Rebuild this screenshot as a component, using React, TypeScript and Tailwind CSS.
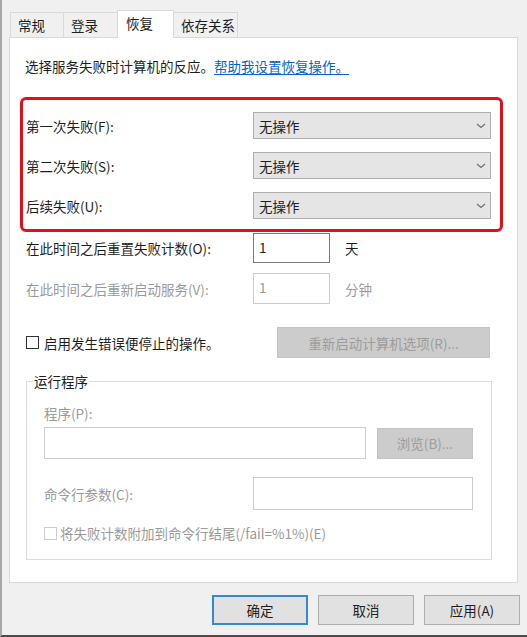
import type { ReactNode } from 'react'

const FONT = { fontFamily: '"Noto Sans CJK SC", "Noto Sans", sans-serif' }

function Tab({ label, width, active = false }: { label: string; width: string; active?: boolean }) {
  if (active) {
    return (
      <div className={`relative z-10 -mb-px h-[28px] ${width} -ml-px border border-b-0 border-[#d9d9d9] bg-white pl-[8px] pt-[3px] leading-[18px] text-[#1e1e1e]`}>
        {label}
      </div>
    )
  }
  return (
    <div className={`h-[25px] ${width} -ml-px border border-b-0 border-[#d9d9d9] bg-[#f0f0f0] pl-[7px] pt-[3px] leading-[18px] text-[#1e1e1e] first:ml-0`}>
      {label}
    </div>
  )
}

function Chevron() {
  return (
    <svg width="10" height="6" viewBox="0 0 10 6" className="shrink-0">
      <path d="M1 1 L5 4.5 L9 1" fill="none" stroke="#6e6e6e" strokeWidth="1.2" />
    </svg>
  )
}

function Dropdown({ label }: { label: string }) {
  return (
    <div className="flex h-[27px] items-center">
      <div className="w-[227px] leading-[18px] text-[#1e1e1e]">{label}</div>
      <div className="flex h-[27px] w-[238px] items-center justify-between border border-[#adadad] bg-[#e5e5e5] pl-[5px] pr-[4px]">
        <span className="leading-[18px] text-[#1e1e1e]">无操作</span>
        <Chevron />
      </div>
    </div>
  )
}

function Checkbox({ disabled = false }: { disabled?: boolean }) {
  return (
    <div className={`h-[13px] w-[13px] shrink-0 border bg-white ${disabled ? 'border-[#cccccc]' : 'border-[#333333]'}`} />
  )
}

function GreyButton({ children, className }: { children: ReactNode; className: string }) {
  return (
    <div className={`flex items-center justify-center border border-[#c4c4c4] bg-[#cccccc] leading-[18px] text-[#9c9c9c] ${className}`}>
      {children}
    </div>
  )
}

function DialogButton({ children, primary = false }: { children: ReactNode; primary?: boolean }) {
  return (
    <div
      className={`flex h-[30px] w-[96px] items-center justify-center bg-[#e1e1e1] leading-[18px] text-[#1e1e1e] ${
        primary ? 'border-2 border-[#3a86d0]' : 'border border-[#adadad]'
      }`}
    >
      {children}
    </div>
  )
}

export default function App() {
  return (
    <div
      className="flex h-[637px] w-[527px] flex-col border-b-2 border-l-2 border-b-[#4a4a4a] border-l-[#a8a8a8] bg-[#f0f0f0] pl-[7px] pt-[10px] text-[13.5px]"
      style={FONT}
    >
      {/* tabs */}
      <div className="flex h-[27px] items-end pl-px">
        <Tab label="常规" width="w-[54px]" />
        <Tab label="登录" width="w-[55px]" />
        <Tab label="恢复" width="w-[57px]" active />
        <Tab label="依存关系" width="w-[65px]" />
      </div>

      {/* panel */}
      <div className="h-[546px] w-[509px] border border-[#d9d9d9] bg-white px-[10px]">
        <div className="ml-[5px] mt-[18px] leading-[20px] text-[#1e1e1e]">
          选择服务失败时计算机的反应。
          <span className="text-[#0066cc] underline underline-offset-2">帮助我设置恢复操作。</span>
        </div>

        <div className="mt-[21px] flex h-[135px] w-[483px] flex-col gap-[13px] rounded-[6px] border-[3px] border-[#e3101c] pb-[10px] pl-[3px] pt-[12px]">
          <Dropdown label="第一次失败(F):" />
          <Dropdown label="第二次失败(S):" />
          <Dropdown label="后续失败(U):" />
        </div>

        <div className="ml-[6px] mt-px flex h-[30px] items-center">
          <div className="w-[227px] leading-[18px] text-[#1e1e1e]">在此时间之后重置失败计数(O):</div>
          <div className="h-[30px] w-[77px] border border-[#7a7a7a] pl-[5px] pt-[4px] leading-[18px] text-[#1e1e1e]">1</div>
          <div className="ml-[15px] leading-[18px] text-[#1e1e1e]">天</div>
        </div>

        <div className="ml-[6px] mt-[10px] flex h-[31px] items-center">
          <div className="w-[227px] leading-[18px] text-[#9a9a9a]">在此时间之后重新启动服务(V):</div>
          <div className="h-[31px] w-[77px] border border-[#cccccc] pl-[5px] pt-[4px] leading-[18px] text-[#9a9a9a]">1</div>
          <div className="ml-[15px] leading-[18px] text-[#9a9a9a]">分钟</div>
        </div>

        <div className="ml-[6px] mt-[23px] flex h-[31px] items-center">
          <div className="flex w-[251px] items-center">
            <Checkbox />
            <span className="ml-[5px] leading-[18px] text-[#1e1e1e]">启用发生错误便停止的操作。</span>
          </div>
          <GreyButton className="h-[31px] w-[213px]">重新启动计算机选项(R)...</GreyButton>
        </div>

        <fieldset className="ml-[6px] mt-[14px] w-[466px] border border-[#dcdcdc] pb-[17px] pl-[17px] pr-[17px]">
          <legend className="-ml-[11px] px-px leading-[18px] text-[#1e1e1e]">运行程序</legend>

          <div className="mt-[14px] leading-[18px] text-[#9a9a9a]">程序(P):</div>
          <div className="mt-[5px] flex h-[32px] items-center gap-[11px]">
            <div className="h-[32px] w-[322px] border border-[#cccccc]" />
            <GreyButton className="h-[31px] w-[96px]">浏览(B)...</GreyButton>
          </div>

          <div className="mt-[18px] flex h-[33px] items-center">
            <div className="w-[209px] leading-[18px] text-[#9a9a9a]">命令行参数(C):</div>
            <div className="h-[33px] w-[220px] border border-[#cccccc]" />
          </div>

          <div className="mt-[14px] flex h-[18px] items-center">
            <Checkbox disabled />
            <span className="ml-[3px] leading-[18px] text-[#9a9a9a]">将失败计数附加到命令行结尾(/fail=%1%)(E)</span>
          </div>
        </fieldset>
      </div>

      {/* dialog buttons */}
      <div className="mt-[12px] flex w-[511px] justify-end gap-[10px]">
        <DialogButton primary>确定</DialogButton>
        <DialogButton>取消</DialogButton>
        <DialogButton>应用(A)</DialogButton>
      </div>
    </div>
  )
}
